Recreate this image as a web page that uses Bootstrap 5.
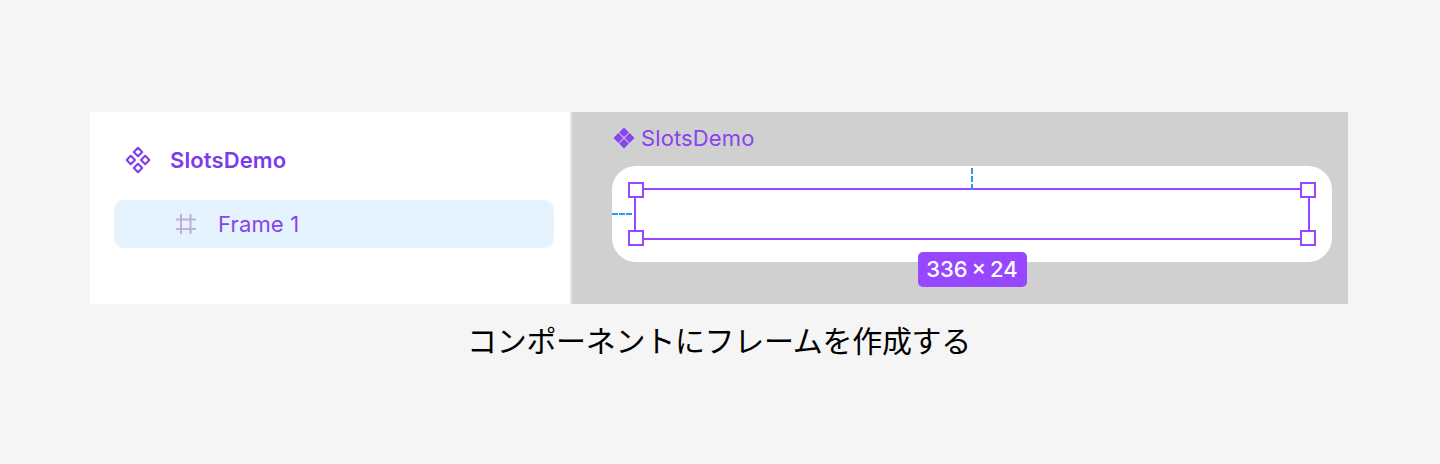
<!DOCTYPE html>
<html lang="ja">
<head>
<meta charset="utf-8">
<title>SlotsDemo</title>
<link href="https://cdn.jsdelivr.net/npm/bootstrap@5.3.0/dist/css/bootstrap.min.css" rel="stylesheet">
<style>
html,body{height:464px;overflow:hidden}
body{background:#f5f5f5;font-family:Inter,"Noto Sans CJK JP",sans-serif;padding:112px 92px 0 90px}
.demo-panel{height:192px}
.side-pane{width:480px;background:#fff;padding:24px 16px 0 24px}
.comp-row{height:48px;color:#7c3aed;font-size:22px;font-weight:600;padding-left:10px;gap:18px;letter-spacing:.12px}
.frame-row{height:48px;margin-top:16px;background:#e5f3fe;border-radius:10px;color:#8844ee;font-size:22px;padding-left:60px;gap:20px;letter-spacing:.15px}
.canvas-pane{background:#d0d0d0;border-left:2px solid #e6e6e6;padding:11px 16px 0 40px}
.canvas-title{height:30px;color:#8844ee;font-size:22px;gap:5px;margin-bottom:13px;letter-spacing:.12px}
.frame-box{background:#fff;border-radius:24px;padding:22px;height:96px}
.select-box{height:52px;border:2px solid #9747ff}
.grip{position:absolute;width:16px;height:16px;background:#fff;border:2px solid #9747ff}
.g-tl{left:-8px;top:-8px}.g-tr{right:-8px;top:-8px}.g-bl{left:-8px;bottom:-8px}.g-br{right:-8px;bottom:-8px}
.gap-v{position:absolute;left:335px;top:-22px;height:22px;width:0;border-left:2px dashed #2997f5}
.gap-h{position:absolute;left:-24px;top:23px;width:20px;height:0;border-top:2px dashed #2997f5}
.dim-tag{position:absolute;left:282px;top:62px;width:109px;height:35px;padding-right:1px;background:#9747ff;color:#fff;border-radius:5px;font-size:22px;font-weight:500;word-spacing:-2px}
.caption-line{margin-top:15px;font-size:30px;line-height:44px;color:#000;letter-spacing:-.3px}
</style>
</head>
<body>
<div class="demo-panel d-flex">
  <div class="side-pane flex-shrink-0">
    <div class="comp-row d-flex align-items-center">
      <svg width="28" height="28" viewBox="0 0 28 28" fill="none" stroke="#7c3aed" stroke-width="2" stroke-linejoin="round"><path d="M14 1.800l4.200 4.200-4.200 4.200-4.200-4.200zM6.800 9.800l4.200 4.200-4.200 4.200-4.200-4.200zM21.200 9.800l4.200 4.200-4.200 4.200-4.200-4.200zM14 17.800l4.200 4.200-4.200 4.200-4.200-4.200z"/></svg>
      <span>SlotsDemo</span>
    </div>
    <div class="frame-row d-flex align-items-center">
      <svg width="24" height="24" viewBox="0 0 24 24" fill="none" stroke="#c4aed8" stroke-width="2"><path d="M7 2v20M16.500 2v20M2 7.500h20M2 17h20"/></svg>
      <span>Frame 1</span>
    </div>
  </div>
  <div class="canvas-pane flex-grow-1">
    <div class="canvas-title d-flex align-items-center">
      <svg width="24" height="24" viewBox="0 0 24 24" fill="#8844ee"><path d="M12 1.500l4.900 4.900-4.900 4.900-4.900-4.900zM6.400 7.100l4.900 4.900-4.900 4.900-4.900-4.900zM17.600 7.100l4.900 4.900-4.900 4.900-4.900-4.900zM12 12.700l4.900 4.900-4.900 4.900-4.900-4.900z"/></svg>
      <span>SlotsDemo</span>
    </div>
    <div class="frame-box">
      <div class="select-box position-relative">
        <i class="gap-v"></i><i class="gap-h"></i>
        <i class="grip g-tl"></i><i class="grip g-tr"></i><i class="grip g-bl"></i><i class="grip g-br"></i>
        <div class="dim-tag d-flex align-items-center justify-content-center">336 × 24</div>
      </div>
    </div>
  </div>
</div>
<div class="caption-line text-center">コンポーネントにフレームを作成する</div>
</body>
</html>
